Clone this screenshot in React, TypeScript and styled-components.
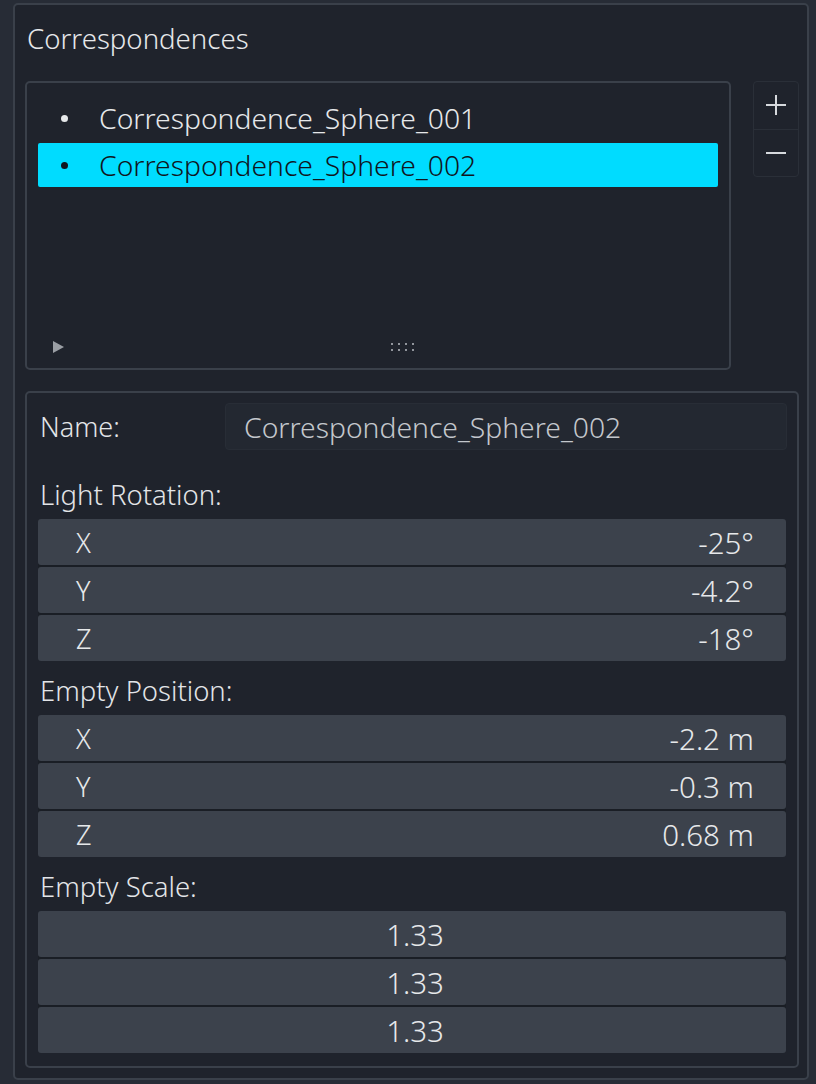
import React from "react";
import styled, { createGlobalStyle } from "styled-components";

const Global = createGlobalStyle`
  html, body { margin: 0; padding: 0; background: #272c36; }
  body { font-family: "Noto Sans", "Open Sans", sans-serif; font-weight: 300; color: #e3e5e8; }
  * { box-sizing: border-box; }
`;

const Page = styled.div`
  width: 816px;
  height: 1084px;
  padding: 3px 7px 4px 13px;
  background: #272c36;
`;

const Panel = styled.div`
  height: 100%;
  border: 2px solid #3a404a;
  border-radius: 5px;
  background: #1f232c;
  padding: 0 8px 10px 10px;
  display: flex;
  flex-direction: column;
`;

const Title = styled.div`
  height: 76px;
  padding: 17px 0 0 2px;
  font-size: 27.6px;
  line-height: 32px;
  color: #e6e8ea;
`;

const ListArea = styled.div`
  display: flex;
  gap: 22px;
  align-items: flex-start;
`;

const ListBox = styled.div`
  width: 706px;
  height: 289px;
  border: 2px solid #3a404a;
  border-radius: 5px;
  padding: 13px 11px 0 11px;
  display: flex;
  flex-direction: column;
`;

const Items = styled.div`
  display: flex;
  flex-direction: column;
  gap: 3px;
  flex: 1;
`;

const Item = styled.div<{ $active?: boolean }>`
  height: 44px;
  display: flex;
  align-items: center;
  padding-left: 61px;
  position: relative;
  border-radius: 2px;
  background: ${(p) => (p.$active ? "#00dcff" : "transparent")};
  color: ${(p) => (p.$active ? "#10161e" : "#e6e8ea")};
  font-size: 28.3px;
  &::before {
    content: "";
    position: absolute;
    left: 23px;
    top: 50%;
    width: 7px;
    height: 7px;
    margin-top: -3px;
    border-radius: 50%;
    background: ${(p) => (p.$active ? "#10161e" : "#e6e8ea")};
  }
`;

const ListFooter = styled.div`
  height: 40px;
  display: flex;
  align-items: center;
  padding-left: 15px;
  padding-bottom: 2px;
`;

const Play = styled.div`
  width: 0;
  height: 0;
  border-top: 6px solid transparent;
  border-bottom: 6px solid transparent;
  border-left: 11px solid #9a9ea4;
`;

const Grip = styled.div`
  margin-left: 327px;
  display: grid;
  grid-template-columns: repeat(4, 3px);
  gap: 4px 4px;
  span {
    width: 2px;
    height: 2px;
    border-radius: 1px;
    background: #b8bcc2;
  }
`;

const SideButtons = styled.div`
  width: 46px;
  height: 96px;
  border: 1px solid #2a2f38;
  border-radius: 4px;
  display: flex;
  flex-direction: column;
`;

const SideButton = styled.div`
  flex: 1;
  display: flex;
  align-items: center;
  justify-content: center;
  & + & {
    border-top: 1px solid #2a2f38;
  }
`;

const Details = styled.div`
  margin-top: 21px;
  flex: 1;
  border: 2px solid #3a404a;
  border-radius: 5px;
  padding: 10px 11px 10px 11px;
  display: flex;
  flex-direction: column;
`;

const NameRow = styled.div`
  display: flex;
  align-items: center;
  height: 47px;
  margin-bottom: 15px;
`;

const NameLabel = styled.div`
  width: 187px;
  padding-left: 2px;
  font-size: 27px;
  color: #e3e5e8;
`;

const NameInput = styled.div`
  flex: 1;
  height: 47px;
  margin-right: -1px;
  background: #232831;
  border: 1px solid #282d36;
  border-radius: 4px;
  display: flex;
  align-items: center;
  padding-left: 18px;
  font-size: 28.3px;
  color: #c3c7cc;
`;

const GroupLabel = styled.div`
  padding: 17px 0 12px 2px;
  line-height: 25px;
  font-size: 27.5px;
  color: #e3e5e8;
`;

const Rows = styled.div`
  display: flex;
  flex-direction: column;
  gap: 2px;
  background: #1a1e25;
  border-radius: 4px;
`;

const ValueRow = styled.div<{ $center?: boolean }>`
  height: 46px;
  background: #3c424c;
  border-radius: 3px;
  display: flex;
  align-items: center;
  justify-content: ${(p) => (p.$center ? "center" : "space-between")};
  padding: 0 32px 0 38px;
  font-size: 29.5px;
  color: #e6e8ea;
`;

const Axis = styled.span`
  font-size: 27px;
`;
const Val = styled.span``;

type Vec = { axis?: string; value: string }[];

const Group: React.FC<{ title: string; rows: Vec; center?: boolean }> = ({ title, rows, center }) => (
  <>
    <GroupLabel>{title}</GroupLabel>
    <Rows>
      {rows.map((r, i) => (
        <ValueRow key={i} $center={center}>
          {r.axis && <Axis>{r.axis}</Axis>}
          <Val>{r.value}</Val>
        </ValueRow>
      ))}
    </Rows>
  </>
);

export default function App() {
  return (
    <>
      <Global />
      <Page>
        <Panel>
          <Title>Correspondences</Title>
          <ListArea>
            <ListBox>
              <Items>
                <Item>Correspondence_Sphere_001</Item>
                <Item $active>Correspondence_Sphere_002</Item>
              </Items>
              <ListFooter>
                <Play />
                <Grip>
                  {Array.from({ length: 8 }).map((_, i) => (
                    <span key={i} />
                  ))}
                </Grip>
              </ListFooter>
            </ListBox>
            <SideButtons>
              <SideButton>
                <svg width="22" height="22" viewBox="0 0 22 22">
                  <path d="M11 1v20M1 11h20" stroke="#d6d9dd" strokeWidth="2" />
                </svg>
              </SideButton>
              <SideButton>
                <svg width="22" height="22" viewBox="0 0 22 22">
                  <path d="M1 11h20" stroke="#d6d9dd" strokeWidth="2" />
                </svg>
              </SideButton>
            </SideButtons>
          </ListArea>
          <Details>
            <NameRow>
              <NameLabel>Name:</NameLabel>
              <NameInput>Correspondence_Sphere_002</NameInput>
            </NameRow>
            <Group
              title="Light Rotation:"
              rows={[
                { axis: "X", value: "-25°" },
                { axis: "Y", value: "-4.2°" },
                { axis: "Z", value: "-18°" },
              ]}
            />
            <Group
              title="Empty Position:"
              rows={[
                { axis: "X", value: "-2.2 m" },
                { axis: "Y", value: "-0.3 m" },
                { axis: "Z", value: "0.68 m" },
              ]}
            />
            <Group
              title="Empty Scale:"
              center
              rows={[{ value: "1.33" }, { value: "1.33" }, { value: "1.33" }]}
            />
          </Details>
        </Panel>
      </Page>
    </>
  );
}
